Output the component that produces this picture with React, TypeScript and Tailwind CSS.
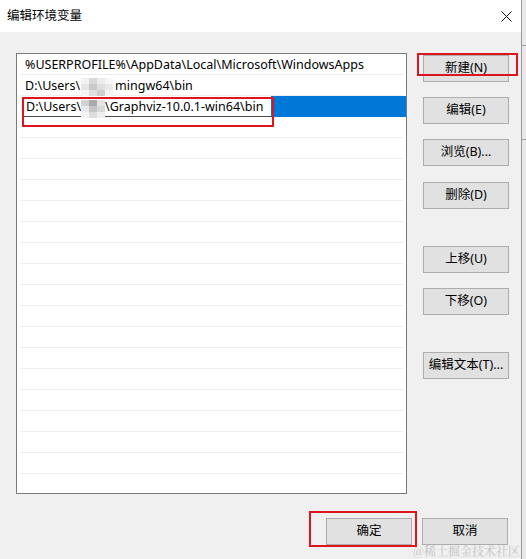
const rows = Array.from({ length: 21 });

function Btn({ label, className = "" }: { label: string; className?: string }) {
  return (
    <div
      className={`w-[86px] h-[27px] flex items-center justify-center bg-[#e1e1e1] border border-[#adadad] text-[12.5px] text-black ${className}`}
    >
      {label}
    </div>
  );
}

function Mosaic({ cells }: { cells: string[][] }) {
  return (
    <div className="flex flex-col">
      {cells.map((r, i) => (
        <div key={i} className="flex">
          {r.map((c, j) => (
            <div key={j} className="w-[8px] h-[6px]" style={{ background: c }} />
          ))}
        </div>
      ))}
    </div>
  );
}

export default function App() {
  return (
    <div
      className="flex w-[526px] h-[559px] overflow-hidden bg-[#f0f0f0]"
      style={{ fontFamily: '"Noto Sans", "Noto Sans CJK SC", sans-serif' }}
    >
      <div className="relative w-[522px] h-full flex flex-col bg-[#f0f0f0] border-r border-[#9a9a9a]">
        {/* title bar */}
        <div className="h-[32px] bg-white flex items-center justify-between pl-[7px] pr-[8px] shrink-0">
          <span className="text-[12.5px] text-black">编辑环境变量</span>
          <svg width="11" height="11" viewBox="0 0 11 11" className="mr-[1px]">
            <path d="M0.5 0.5 L10.5 10.5 M10.5 0.5 L0.5 10.5" stroke="#111" strokeWidth="1" />
          </svg>
        </div>

        {/* body */}
        <div className="flex pt-[21px] pl-[16px]">
          <div className="w-[391px] h-[441px] border border-[#7a7a7a] bg-white overflow-hidden text-[12.5px] text-black">
            <div className="mx-[3px] h-[21px] border-b border-[#efefef] pl-[5px] pt-[2px] flex items-center">
              %USERPROFILE%\AppData\Local\Microsoft\WindowsApps
            </div>
            <div className="mx-[3px] h-[21px] border-b border-[#efefef] pl-[5px] pt-[2px] flex items-center">
              <span>D:\Users\</span>
              <div className="ml-[1px] mr-[2px] mt-[2px]">
                <Mosaic
                  cells={[
                    ["#f2f2f2", "#d9d9d9", "#ececec", "#f7f7f7"],
                    ["#e6e6e6", "#c9c9c9", "#dedede", "#e9e9e9"],
                    ["#f5f5f5", "#e0e0e0", "#cfcfcf", "#f3f3f3"],
                  ]}
                />
              </div>
              <span>mingw64\bin</span>
            </div>
            <div className="h-[21px] flex">
              <div className="w-[6px] bg-white" />
              <div className="w-[248px] bg-white border-b border-[#4a4a4a] pl-[3px] pt-[2px] flex items-center">
                <span>D:\Users\</span>
                <div className="mt-[4px]">
                  <Mosaic
                    cells={[
                      ["#d2d2d2", "#a9a9a9", "#e4e4e4"],
                      ["#e9e9e9", "#c4c4c4", "#d8d8d8"],
                      ["#f4f4f4", "#dcdcdc", "#f0f0f0"],
                    ]}
                  />
                </div>
                <span>\Graphviz-10.0.1-win64\bin</span>
              </div>
              <div className="flex-1 bg-[#0078d7]" />
            </div>
            {rows.map((_, i) => (
              <div key={i} className="mx-[3px] h-[21px] border-b border-[#efefef]" />
            ))}
          </div>

          <div className="ml-[16px] pt-[2px] flex flex-col">
            <Btn label="新建(N)" />
            <Btn label="编辑(E)" className="mt-[15px]" />
            <Btn label="浏览(B)..." className="mt-[15px]" />
            <Btn label="删除(D)" className="mt-[16px]" />
            <Btn label="上移(U)" className="mt-[37px]" />
            <Btn label="下移(O)" className="mt-[15px]" />
            <Btn label="编辑文本(T)..." className="mt-[37px]" />
          </div>
        </div>

        {/* footer */}
        <div className="flex pt-[24px] pl-[326px]">
          <Btn label="确定" className="w-[85px]" />
          <Btn label="取消" className="w-[84px] ml-[10px]" />
        </div>

        {/* red annotation boxes */}
        <div className="absolute left-[22px] top-[97px] w-[252px] h-[30px] border-2 border-[#e0141e]" />
        <div className="absolute left-[417px] top-[53px] w-[101px] h-[23px] border-2 border-[#e0141e]" />
        <div className="absolute left-[309px] top-[511px] w-[108px] h-[36px] border-2 border-[#e0141e]" />

        <div
          className="absolute right-[1px] bottom-[2px] text-[12px] text-[#c4c4c4] leading-none"
          style={{ fontFamily: '"Noto Serif CJK SC", "Noto Sans CJK SC", serif' }}
        >
          @稀土掘金技术社区
        </div>
      </div>
      <div className="w-[4px] h-full bg-[#e9e9e9] flex flex-col">
        <div className="h-[46px] border-b border-[#a0a0a0]" />
        <div className="h-[94px] border-b border-[#a0a0a0]" />
      </div>
    </div>
  );
}
